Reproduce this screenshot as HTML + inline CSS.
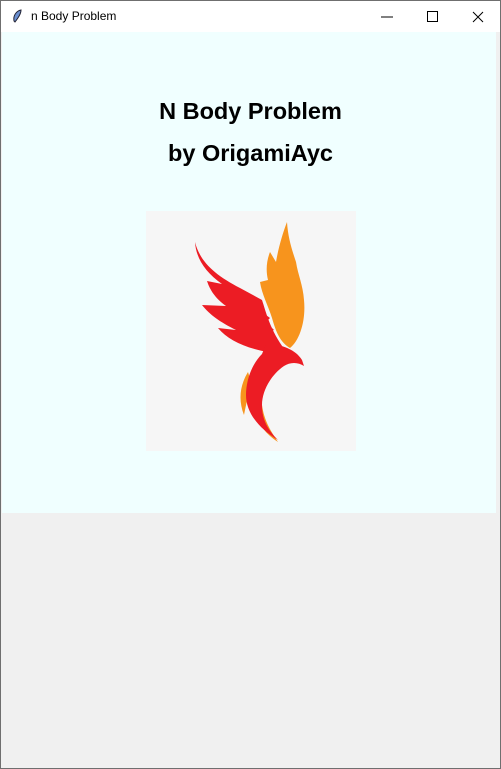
<!DOCTYPE html>
<html><head><style>
body{margin:0;width:501px;height:769px;background:#f0f0f0;font-family:"Liberation Sans",sans-serif;position:relative;overflow:hidden}
.win{position:absolute;left:0;top:0;width:499px;height:767px;border:1px solid #6f6f6f;background:#f0f0f0}
.tb{position:absolute;left:0;top:0;width:499px;height:31px;background:#fff}
.tt{position:absolute;left:30px;top:8px;font-size:12px;color:#000;font-family:"Liberation Sans","Noto Sans CJK SC",sans-serif}
.panel{position:absolute;left:2px;top:32px;width:494px;height:481px;background:#f0ffff}
h1{position:absolute;left:0;width:501px;text-align:center;margin:0;font-size:23.5px;font-weight:bold;color:#000}
.img{position:absolute;left:146px;top:211px;width:210px;height:240px;background:#f6f6f6}
</style></head><body>
<div class="win">
<div class="tb">
<svg style="position:absolute;left:10px;top:8px" width="12" height="14" viewBox="0 0 12 14"><path d="M10 1 C5 2 2 7 3 12 L4 13 C7 9 10 5 10 1Z" fill="#6a8fd0" stroke="#223" stroke-width="1"/></svg>
<div class="tt">n Body Problem</div>
<svg style="position:absolute;left:380px;top:9px" width="110" height="14" viewBox="0 0 110 14"><path d="M0 7H12" stroke="#000"/><path d="M46.5 1.5h10v10h-10z" fill="none" stroke="#000"/><path d="M92 2l10 10M102 2l-10 10" stroke="#000"/></svg>
</div>
</div>
<div class="panel"></div>
<h1 style="top:98px">N Body Problem</h1>
<h1 style="top:140px">by OrigamiAyc</h1>
<div class="img"></div>
<svg style="position:absolute;left:0;top:0" width="501" height="769">
<path d="M248 372 C240 385 238 400 244 415 C246 405 248 395 252 385Z M256 410 C258 425 266 434 278 442 C270 430 264 420 262 405Z" fill="#f7941d"/>
<path d="M287 222 C282 235 278 250 276 262 L270 252 C266 262 266 272 268 280 L260 282 C262 295 268 305 272 318 C276 332 280 342 290 348 C300 340 306 320 304 300 C303 285 298 275 296 262 C292 250 288 238 287 222Z" fill="#f7941d"/>
<path d="M195 242 C200 262 215 275 240 288 L262 300 C266 312 270 330 285 350 L268 352 C245 348 228 340 218 328 L236 330 C220 322 210 315 202 305 L226 306 C215 298 210 290 207 281 L222 284 C205 272 196 258 195 242Z" fill="#ec1c24"/>
<path d="M262 312 L270 318 L266 322 L274 330 L268 332 Z" fill="#ec1c24"/>
<path d="M266 344 C282 344 296 350 302 360 L304 366 C298 362 290 362 284 366 C272 374 262 390 262 405 C262 420 268 430 278 440 C258 428 246 412 246 395 C246 380 252 364 262 354Z" fill="#ec1c24"/>
</svg>
</body></html>
